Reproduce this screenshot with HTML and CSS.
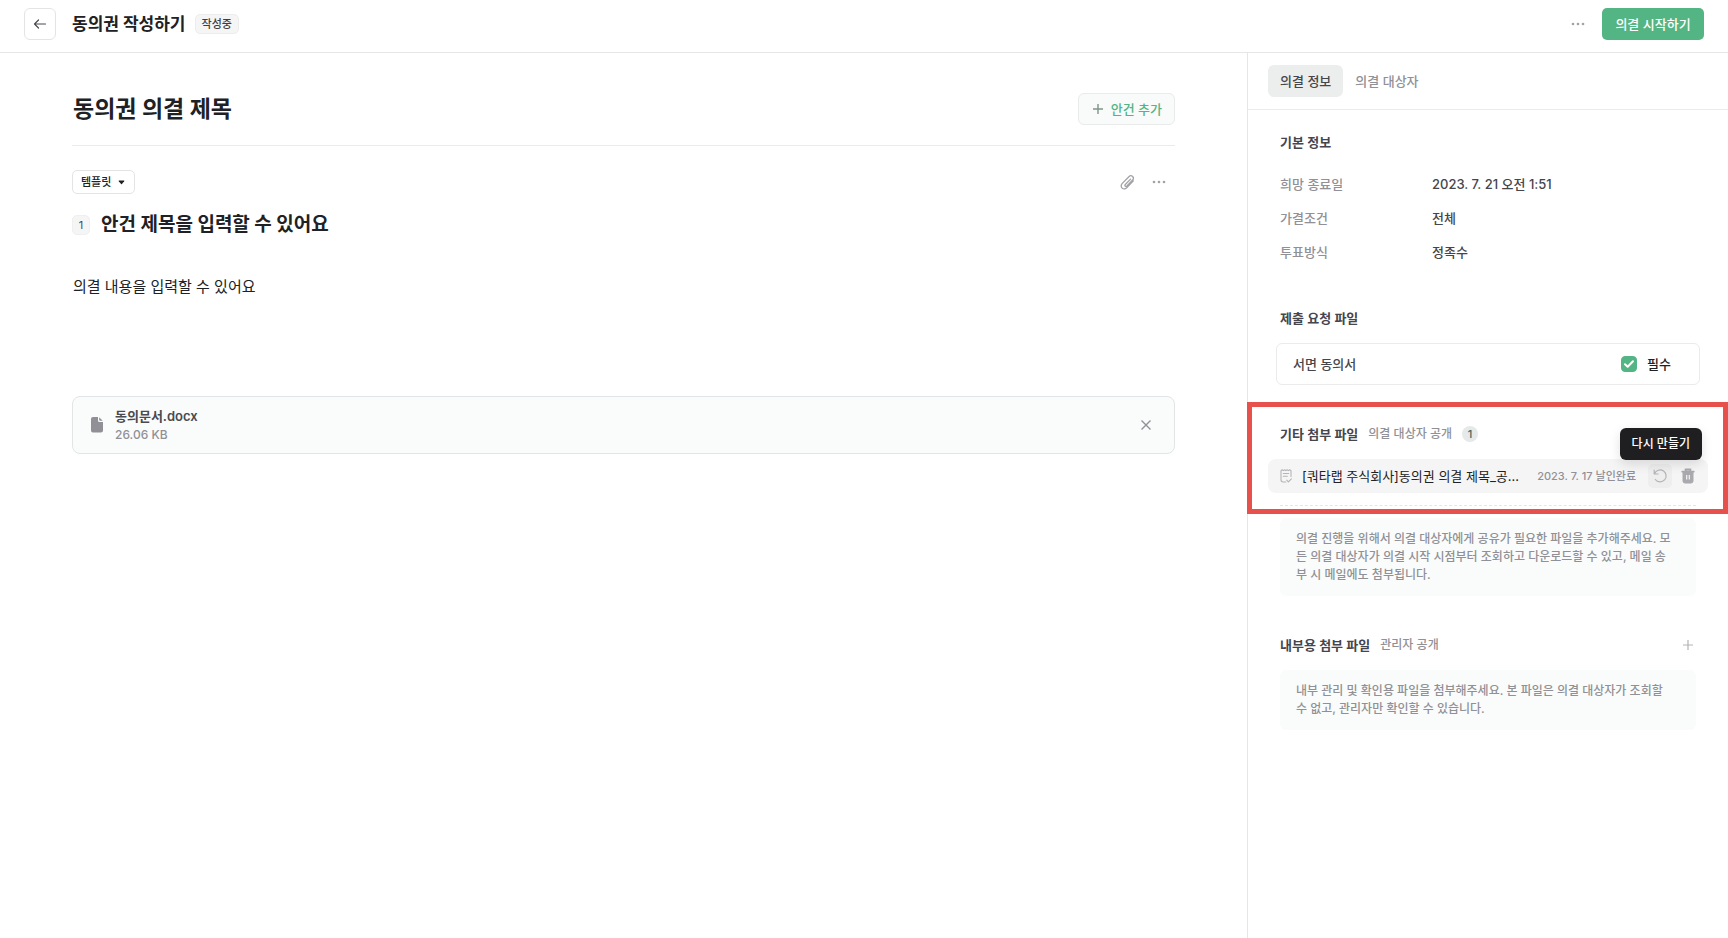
FILE: index.html
```html
<!DOCTYPE html>
<html lang="ko">
<head>
<meta charset="utf-8">
<meta name="viewport" content="width=device-width, initial-scale=1">
<title>동의권 작성하기</title>
<link rel="stylesheet" href="styles.css">
</head>
<body>
<header class="topbar">
  <button class="back" type="button" aria-label="뒤로">
    <svg width="14" height="12" viewBox="0 0 14 12" fill="none" stroke="currentColor" stroke-width="1.2" stroke-linecap="round" stroke-linejoin="round"><path d="M12.500 6H1.500M5.500 2 1.500 6l4 4"/></svg>
  </button>
  <h1 class="page-title">동의권 작성하기</h1>
  <span class="status">작성중</span>
  <button class="icon-btn topbar-more" type="button" aria-label="더보기">
    <svg width="14" height="4" viewBox="0 0 14 4" fill="currentColor"><circle cx="2" cy="2" r="1.3"/><circle cx="7" cy="2" r="1.3"/><circle cx="12" cy="2" r="1.3"/></svg>
  </button>
  <button class="primary" type="button">의결 시작하기</button>
</header>

<div class="layout">
  <main class="editor">
    <div class="title-row">
      <input class="doc-title" type="text" aria-label="의결 제목" value="동의권 의결 제목">
      <button class="add-agenda" type="button">
        <svg width="10" height="10" viewBox="0 0 10 10" fill="none" stroke="currentColor" stroke-width="1.4"><path d="M5 0v10M0 5h10"/></svg>
        안건 추가
      </button>
    </div>

    <section class="agenda">
      <div class="agenda-tools">
        <div class="template">
          <select class="template-select" aria-label="템플릿"><option>템플릿</option></select>
          <svg class="template-caret" width="7" height="5" viewBox="0 0 8 5" fill="currentColor"><path d="M1.300.3h5.400q1 0 .4.8L4.500 4.200q-.5.5-1 0L.9 1.100Q.3.3 1.300.3Z"/></svg>
        </div>
        <div class="agenda-actions">
          <button class="icon-btn" type="button" aria-label="파일 첨부">
            <svg width="15" height="16" viewBox="0 0 15 16" fill="none" stroke="currentColor" stroke-width="1.3" stroke-linecap="round" stroke-linejoin="round"><path d="m10.6 5.1-5.3 5.4c-.9 1-.1 2.200 1 1.900l.6-.4 5.500-5.700c1.200-1.200 1.200-2.800.2-3.800-1-1-2.600-.9-3.700.200L2.300 9.400c-1.400 1.500-1.500 3.500-.2 4.700 1.200 1.200 3.200 1.100 4.600-.3l6.600-6.900"/></svg>
          </button>
          <button class="icon-btn" type="button" aria-label="안건 더보기">
            <svg width="14" height="4" viewBox="0 0 14 4" fill="currentColor"><circle cx="2" cy="2" r="1.3"/><circle cx="7" cy="2" r="1.3"/><circle cx="12" cy="2" r="1.3"/></svg>
          </button>
        </div>
      </div>
      <div class="agenda-head">
        <span class="agenda-no">1</span>
        <input class="agenda-title" type="text" aria-label="안건 제목" value="안건 제목을 입력할 수 있어요">
      </div>
      <textarea class="agenda-body" aria-label="의결 내용">의결 내용을 입력할 수 있어요</textarea>
      <div class="attachment">
        <svg class="attachment-icon" width="12" height="16" viewBox="0 0 12 16" fill="currentColor"><path d="M2 0h5v3.500Q7 5 8.500 5H12v8.500Q12 15.500 10 15.500H2Q0 15.500 0 13.500V2Q0 0 2 0Z"/><path d="M8.200.300 11.700 3.800H9Q8.200 3.800 8.200 3Z"/></svg>
        <div class="attachment-text">
          <div class="attachment-name">동의문서.docx</div>
          <div class="attachment-size">26.06 KB</div>
        </div>
        <button class="icon-btn attachment-remove" type="button" aria-label="첨부 삭제">
          <svg width="10" height="10" viewBox="0 0 10 10" fill="none" stroke="currentColor" stroke-width="1.4"><path d="m.5.5 9 9M9.500.5l-9 9"/></svg>
        </button>
      </div>
    </section>
  </main>

  <aside class="side">
    <nav class="tabs" aria-label="의결 패널">
      <button class="tab tab-active" type="button">의결 정보</button>
      <button class="tab" type="button">의결 대상자</button>
    </nav>

    <section class="basic">
      <h2 class="side-title">기본 정보</h2>
      <dl class="info">
        <dt>희망 종료일</dt><dd>2023. 7. 21 오전 1:51</dd>
        <dt>가결조건</dt><dd>전체</dd>
        <dt>투표방식</dt><dd>정족수</dd>
      </dl>
    </section>

    <section class="requested">
      <h2 class="side-title">제출 요청 파일</h2>
      <div class="request">
        <span>서면 동의서</span>
        <label class="required" for="required">
          <span class="check">
            <input class="check-input" id="required" type="checkbox" checked>
            <svg class="check-mark" width="16" height="16" viewBox="0 0 16 16" fill="none" stroke="currentColor" stroke-width="2" stroke-linecap="round" stroke-linejoin="round"><path d="m4 8.200 2.700 2.600L12 5.300"/></svg>
          </span>
          필수
        </label>
      </div>
    </section>

    <section class="highlight">
      <div class="side-head">
        <h2 class="side-title">기타 첨부 파일</h2>
        <span class="scope">의결 대상자 공개</span>
        <span class="count">1</span>
      </div>
      <div class="file">
        <svg class="file-icon" width="12" height="14" viewBox="0 0 12 14" fill="none" stroke="currentColor" stroke-width="1.100" stroke-linecap="round" stroke-linejoin="round"><path d="M11 7.500V1.700l-1.300-.9-1.300.8L7.200.8 6 1.600 4.700.8l-1.300.8L2.200.8 1 1.700v9.100q0 2.200 2.200 2.200h2.600M3.300 4.500h5.400M3.300 7.200h4M6.800 11.200l1.600 1.600 3-3"/></svg>
        <span class="file-name">[쿼타랩 주식회사]동의권 의결 제목_공...</span>
        <span class="file-date">2023. 7. 17 날인완료</span>
        <span class="redo-wrap">
          <button class="redo" type="button" aria-describedby="redo-tip" aria-label="다시 만들기">
            <svg width="16" height="16" viewBox="0 0 16 16" fill="none" stroke="currentColor" stroke-width="1.200" stroke-linecap="round" stroke-linejoin="round"><path d="M2.200 2v4h4M2.500 5.800A6 6 0 1 1 3.300 11.500"/></svg>
          </button>
          <span class="tooltip" id="redo-tip" role="tooltip">다시 만들기</span>
        </span>
        <button class="trash" type="button" aria-label="삭제">
          <svg width="14" height="16" viewBox="0 0 14 16" fill="none" stroke="currentColor"><path d="M2 4h10v9q0 2-2 2H4q-2 0-2-2Z" fill="currentColor"/><path d="M1.200 3.600h11.600M4.600 3V1.500h4.800V3" stroke-width="1.800" stroke-linecap="round"/><path d="M5.700 7v4.500M8.300 7v4.500" stroke="#f5f5f6" stroke-width="1.200"/></svg>
        </button>
      </div>
      <div class="dashed"></div>
    </section>

    <p class="help">의결 진행을 위해서 의결 대상자에게 공유가 필요한 파일을 추가해주세요. 모든 의결 대상자가 의결 시작 시점부터 조회하고 다운로드할 수 있고, 메일 송부 시 메일에도 첨부됩니다.</p>

    <section class="internal">
      <div class="side-head internal-head">
        <h2 class="side-title">내부용 첨부 파일</h2>
        <span class="scope">관리자 공개</span>
        <button class="icon-btn add-file" type="button" aria-label="파일 추가">
          <svg width="10" height="10" viewBox="0 0 10 10" fill="none" stroke="currentColor" stroke-width="1.200"><path d="M5 0v10M0 5h10"/></svg>
        </button>
      </div>
      <p class="help">내부 관리 및 확인용 파일을 첨부해주세요. 본 파일은 의결 대상자가 조회할 수 없고, 관리자만 확인할 수 있습니다.</p>
    </section>
  </aside>
</div>
</body>
</html>
```
FILE: styles.css
```css
* { box-sizing: border-box; }

body {
  margin: 0;
  min-height: 100vh;
  display: flex;
  flex-direction: column;
  background: #fff;
  color: #202124;
  font-family: Inter, "Noto Sans CJK KR", sans-serif;
  font-size: 13px;
  line-height: 20px;
}

h1, h2, p, dl, dd { margin: 0; }
button, input, select, textarea { font: inherit; color: inherit; }
button { cursor: pointer; white-space: nowrap; }
svg { display: block; flex: none; }

.topbar {
  display: flex;
  align-items: center;
  padding: 8px 24px 12px;
  border-bottom: 1px solid #e4e6e7;
}
.back {
  display: grid;
  place-items: center;
  width: 32px;
  height: 32px;
  padding: 0;
  margin-right: 16px;
  border: 1px solid #e4e4e6;
  border-radius: 6px;
  background: #fff;
  color: #4a4a50;
}
.page-title { font-size: 17px; line-height: 24px; font-weight: 700; }
.status {
  margin-left: 9px;
  padding: 0 6px;
  border: 1px solid #ededee;
  border-radius: 5px;
  background: #f5f5f6;
  color: #3d3d43;
  font-size: 11px;
  font-weight: 500;
  line-height: 18px;
}
.icon-btn {
  display: grid;
  place-items: center;
  width: 32px;
  height: 32px;
  padding: 0;
  border: 0;
  background: none;
  color: #a2a2a7;
}
.topbar-more { margin-left: auto; }
.primary {
  min-width: 102px;
  height: 32px;
  margin-left: 8px;
  padding: 0 12px;
  border: 0;
  border-radius: 5px;
  background: #54b584;
  color: #fff;
  font-weight: 500;
}

.layout {
  flex: 1;
  display: grid;
  grid-template-columns: minmax(0, 1fr) 481px;
}
.editor { padding: 40px 72px; }
.title-row {
  display: flex;
  align-items: center;
  gap: 16px;
  padding-bottom: 20px;
  border-bottom: 1px solid #ebebec;
}
.doc-title, .agenda-title {
  flex: 1;
  min-width: 0;
  padding: 0;
  border: 0;
  background: none;
  font-weight: 700;
}
.doc-title { padding-left: 1px; font-size: 23px; line-height: 32px; height: 32px; }
.add-agenda {
  display: flex;
  align-items: center;
  gap: 8px;
  height: 32px;
  padding: 0 12px 0 14px;
  border: 1px solid #e9ebeb;
  border-radius: 6px;
  background: #f9fbfa;
  color: #54b584;
  font-weight: 500;
}
.add-agenda svg { color: #7d9689; }

.agenda { padding-top: 20px; }
.agenda-tools { display: flex; align-items: center; justify-content: space-between; height: 32px; }
.template { display: inline-grid; align-items: center; }
.template-select {
  grid-area: 1 / 1;
  width: 63px;
  height: 24px;
  padding: 0 8px;
  border: 1px solid #e4e4e6;
  border-radius: 5px;
  background: #fff;
  appearance: none;
  font-size: 11px;
  font-weight: 500;
}
.template-caret { grid-area: 1 / 1; justify-self: end; margin-right: 10px; pointer-events: none; }
.agenda-actions { display: flex; }
.agenda-head { display: flex; align-items: center; gap: 11px; margin-top: 13px; }
.agenda-no {
  width: 18px;
  border: 1px solid #efeff0;
  border-radius: 5px;
  background: #f5f5f6;
  color: #4a4a50;
  font-size: 11px;
  line-height: 18px;
  text-align: center;
}
.agenda-title { font-size: 19px; line-height: 28px; height: 28px; }
.agenda-body {
  display: block;
  width: 100%;
  height: 103px;
  margin: 36px 0 18px;
  padding: 0 1px;
  border: 0;
  background: none;
  resize: none;
  font-size: 15px;
  line-height: 24px;
}
.attachment {
  display: flex;
  align-items: center;
  gap: 12px;
  padding: 9px 12px 9px 18px;
  border: 1px solid #e2e5e5;
  border-radius: 8px;
  background: #fafcfb;
}
.attachment-icon { color: #909096; }
.attachment-text { flex: 1; }
.attachment-name { color: #4a4a50; font-weight: 600; }
.attachment-size { color: #909096; font-size: 12px; font-weight: 500; line-height: 18px; }
.attachment-remove { color: #909096; }

.side { border-left: 1px solid #e4e6e7; }
.tabs { display: flex; padding: 12px 20px; border-bottom: 1px solid #ebebec; }
.tab {
  height: 32px;
  padding: 0 12px;
  border: 0;
  border-radius: 6px;
  background: none;
  color: #909096;
  font-weight: 500;
}
.tab-active { background: #eceeed; color: #45454b; }
.side-title { color: #45454b; font-size: 13px; line-height: 20px; font-weight: 600; }
.basic { padding: 22px 32px 0; }
.info {
  display: grid;
  grid-template-columns: 152px 1fr;
  row-gap: 14px;
  margin-top: 22px;
  font-weight: 500;
}
.info dt { color: #909096; }
.info dd { color: #45454b; }
.requested { padding: 46px 28px 17px; }
.requested .side-title { margin-left: 4px; }
.request {
  display: flex;
  align-items: center;
  justify-content: space-between;
  margin-top: 15px;
  padding: 10px 28px 10px 16px;
  border: 1px solid #ebebec;
  border-radius: 6px;
  color: #45454b;
  font-weight: 500;
}
.required { display: flex; align-items: center; gap: 10px; color: #202124; }
.check { display: grid; }
.check-input {
  grid-area: 1 / 1;
  width: 16px;
  height: 16px;
  margin: 0;
  border: 1px solid #c9cccb;
  border-radius: 4px;
  appearance: none;
}
.check-input:checked { border-color: #54b584; background: #54b584; }
.check-mark { grid-area: 1 / 1; z-index: 1; color: #fff; pointer-events: none; }

.highlight {
  margin-left: -1px;
  padding: 17px 15px 3px 16px;
  border: 5px solid #e6524b;
}
.side-head { display: flex; align-items: center; gap: 10px; }
.highlight .side-head { padding-left: 12px; }
.scope { color: #909096; font-size: 12px; font-weight: 500; }
.count {
  width: 16px;
  border-radius: 8px;
  background: #e6e9e9;
  color: #4a6659;
  font-size: 11px;
  font-weight: 500;
  line-height: 16px;
  text-align: center;
}
.file {
  display: flex;
  align-items: center;
  height: 34px;
  margin-top: 15px;
  padding: 0 12px;
  border-radius: 8px;
  background: #f5f5f6;
}
.file-icon { color: #b4b4b8; }
.file-name {
  flex: 1;
  min-width: 0;
  margin: 0 12px 0 10px;
  overflow: hidden;
  white-space: nowrap;
}
.file-date { color: #909096; font-size: 11px; font-weight: 500; white-space: nowrap; }
.redo-wrap { position: relative; margin: 0 8px 0 12px; }
.redo, .trash {
  display: grid;
  place-items: center;
  width: 24px;
  height: 24px;
  padding: 0;
  border: 0;
  border-radius: 5px;
  background: #eeeeef;
  color: #b4b4b8;
}
.trash { width: 16px; background: none; color: #aaaaae; }
.tooltip {
  position: absolute;
  right: -30px;
  bottom: 28px;
  padding: 6px 12px;
  border-radius: 6px;
  background: #1f1f21;
  box-shadow: 0 4px 12px rgba(0, 0, 0, 0.12);
  color: #fff;
  font-size: 12px;
  font-weight: 500;
  white-space: nowrap;
}
.dashed { margin: 12px 12px 0; border-top: 1px dashed #e2e7e5; }

.help {
  margin: 4px 32px 0;
  padding: 12px 20px 12px 16px;
  border-radius: 6px;
  background: #fafcfb;
  color: #909096;
  font-size: 12px;
  font-weight: 500;
  line-height: 18px;
  word-break: break-all;
}
.internal { padding-top: 27px; }
.internal-head { padding: 0 24px 0 32px; }
.add-file { margin-left: auto; color: #b4b4b8; }
.internal .help { margin-top: 9px; }
.internal { padding-top: 33px; }
```
